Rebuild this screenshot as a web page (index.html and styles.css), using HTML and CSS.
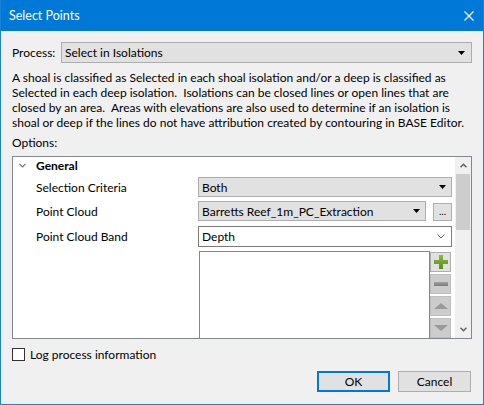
FILE: index.html
```html
<!DOCTYPE html>
<html>
<head>
<meta charset="utf-8">
<link rel="stylesheet" href="styles.css">
</head>
<body>
<div class="window">
  <div class="titlebar">
    <span class="title">Select Points</span>
    <svg class="close" width="10" height="10" viewBox="0 0 10 10"><path d="M0.5 0.5 L9.5 9.5 M9.5 0.5 L0.5 9.5" stroke="#fff" stroke-width="1.1" fill="none"/></svg>
  </div>
  <div class="content">
    <div class="process-row">
      <span class="process-label">Process:</span>
      <div class="combo combo-process">
        <span class="combo-text">Select in Isolations</span>
        <svg class="tri" width="7" height="4" viewBox="0 0 7 4"><path d="M0 0 H7 L3.5 4 Z" fill="#000"/></svg>
      </div>
    </div>
    <div class="desc">A shoal is classified as Selected in each shoal isolation and/or a deep is classified as
Selected in each deep isolation.  Isolations can be closed lines or open lines that are
closed by an area.  Areas with elevations are also used to determine if an isolation is
shoal or deep if the lines do not have attribution created by contouring in BASE Editor.</div>
    <div class="options-label">Options:</div>
    <div class="panel">
      <div class="tree">
        <div class="group-row">
          <svg class="chev" width="7" height="5" viewBox="0 0 7 5"><path d="M0.5 0.8 L3.5 3.8 L6.5 0.8" stroke="#707070" stroke-width="1.2" fill="none"/></svg>
          <span class="group-title">General</span>
        </div>
        <div class="prop-row">
          <span class="prop-label">Selection Criteria</span>
          <div class="combo combo-full">
            <span class="combo-text">Both</span>
            <svg class="tri" width="7" height="4" viewBox="0 0 7 4"><path d="M0 0 H7 L3.5 4 Z" fill="#000"/></svg>
          </div>
        </div>
        <div class="prop-row">
          <span class="prop-label">Point Cloud</span>
          <div class="value-split">
            <div class="combo combo-cloud">
              <span class="combo-text">Barretts Reef_1m_PC_Extraction</span>
              <svg class="tri" width="7" height="4" viewBox="0 0 7 4"><path d="M0 0 H7 L3.5 4 Z" fill="#000"/></svg>
            </div>
            <div class="ellipsis">...</div>
          </div>
        </div>
        <div class="prop-row row-gap5">
          <span class="prop-label">Point Cloud Band</span>
          <div class="combo combo-edit">
            <span class="combo-text">Depth</span>
            <svg class="vchev" width="8" height="5" viewBox="0 0 8 5"><path d="M0.5 0.5 L4 4 L7.5 0.5" stroke="#606060" stroke-width="1" fill="none"/></svg>
          </div>
        </div>
        <div class="list-row">
          <div class="listbox"></div>
          <div class="list-buttons">
            <div class="lbtn lbtn-on">
              <svg width="14" height="14" viewBox="0 0 14 14"><defs><linearGradient id="g" x1="0" y1="0" x2="0" y2="1"><stop offset="0" stop-color="#8dbb3c"/><stop offset="1" stop-color="#5f8c1a"/></linearGradient></defs><path d="M5 0 H9 V5 H14 V9 H9 V14 H5 V9 H0 V5 H5 Z" fill="url(#g)"/></svg>
            </div>
            <div class="lbtn lbtn-off">
              <svg width="14" height="4" viewBox="0 0 14 4"><defs><linearGradient id="m" x1="0" y1="0" x2="0" y2="1"><stop offset="0" stop-color="#a0a0a0"/><stop offset="1" stop-color="#7a7a7a"/></linearGradient></defs><rect x="0" y="0" width="14" height="4" fill="url(#m)"/></svg>
            </div>
            <div class="lbtn lbtn-off">
              <svg width="14" height="6" viewBox="0 0 14 6"><path d="M0 6 L7 0 L14 6 Z" fill="#9a9a9a"/></svg>
            </div>
            <div class="lbtn lbtn-off">
              <svg width="14" height="6" viewBox="0 0 14 6"><path d="M0 0 L14 0 L7 6 Z" fill="#9a9a9a"/></svg>
            </div>
          </div>
        </div>
      </div>
      <div class="scrollbar">
        <div class="sb-arrow">
          <svg width="7" height="5" viewBox="0 0 7 5"><path d="M0.5 4.2 L3.5 1.2 L6.5 4.2" stroke="#606060" stroke-width="1.5" fill="none"/></svg>
        </div>
        <div class="sb-thumb"></div>
        <div class="sb-space"></div>
        <div class="sb-arrow">
          <svg width="7" height="5" viewBox="0 0 7 5"><path d="M0.5 0.8 L3.5 3.8 L6.5 0.8" stroke="#606060" stroke-width="1.5" fill="none"/></svg>
        </div>
      </div>
    </div>
    <div class="check-row">
      <span class="checkbox"></span>
      <span class="check-label">Log process information</span>
    </div>
    <div class="button-row">
      <div class="btn btn-default">OK</div>
      <div class="btn">Cancel</div>
    </div>
  </div>
</div>
</body>
</html>
```
FILE: styles.css
```css
html, body {
  margin: 0;
  padding: 0;
}
body {
  font-family: "Lato", "Noto Sans", sans-serif;
  font-size: 12px;
  color: #000;
}
.window {
  width: 484px;
  height: 405px;
  box-sizing: border-box;
  border: 1px solid #1883d7;
  border-top: none;
  background: #f0f0f0;
  display: flex;
  flex-direction: column;
  overflow: hidden;
}
.titlebar {
  height: 31px;
  flex: none;
  background: #0078d7;
  display: flex;
  align-items: center;
  justify-content: space-between;
  padding-left: 8px;
  padding-right: 9px;
}
.title {
  color: #fff;
  font-size: 12.5px;
  line-height: 15px;
}
.close {
  display: block;
}
.content {
  padding: 11px 11px 0 11px;
  display: flex;
  flex-direction: column;
}
.process-row {
  display: flex;
  align-items: center;
  height: 21px;
}
.process-label {
  width: 49px;
  flex: none;
}
.combo {
  box-sizing: border-box;
  height: 20px;
  border: 1px solid #adadad;
  background: #e1e1e1;
  display: flex;
  align-items: center;
  justify-content: space-between;
  padding: 0 5px 0 3px;
}
.combo-process {
  flex: 1;
  height: 21px;
  padding-right: 6px;
}
.combo-text {
  white-space: nowrap;
  line-height: 15px;
}
.tri {
  display: block;
  flex: none;
}
.desc {
  margin-top: 7px;
  line-height: 15px;
  white-space: pre;
}
.options-label {
  margin-top: 5px;
  line-height: 15px;
}
.panel {
  margin-top: 6px;
  height: 183px;
  box-sizing: border-box;
  border: 1px solid #828790;
  background: #fff;
  display: flex;
  overflow: hidden;
}
.tree {
  width: 442px;
  flex: none;
  display: flex;
  flex-direction: column;
}
.group-row {
  height: 17px;
  flex: none;
  display: flex;
  align-items: center;
  padding-left: 6px;
}
.chev {
  display: block;
  margin-right: 10px;
}
.group-title {
  font-weight: bold;
  line-height: 15px;
}
.prop-row {
  display: grid;
  grid-template-columns: 185px 254px;
  align-items: center;
  height: 20px;
  margin-top: 4px;
  flex: none;
}
.group-row + .prop-row {
  margin-top: 3px;
}
.row-gap5 {
  margin-top: 5px;
  height: 21px;
}
.prop-label {
  padding-left: 23px;
  white-space: nowrap;
}
.combo-full {
  width: 254px;
}
.value-split {
  display: flex;
  align-items: flex-end;
  justify-content: space-between;
  height: 20px;
}
.combo-cloud {
  width: 228px;
}
.ellipsis {
  box-sizing: border-box;
  width: 19px;
  height: 18px;
  border: 1px solid #adadad;
  background: #e1e1e1;
  font-size: 10px;
  line-height: 14px;
  text-align: center;
  letter-spacing: 0;
}
.combo-edit {
  width: 254px;
  height: 21px;
  background: #fff;
  border-color: #7a7a7a;
  padding-right: 6px;
}
.vchev {
  display: block;
}
.list-row {
  display: flex;
  margin-top: 4px;
  margin-left: 186px;
  flex: none;
}
.listbox {
  box-sizing: border-box;
  width: 231px;
  height: 120px;
  border: 1px solid #828790;
  background: #fff;
}
.list-buttons {
  display: flex;
  flex-direction: column;
  gap: 2px;
  padding-top: 1px;
}
.lbtn {
  box-sizing: border-box;
  width: 21px;
  height: 20px;
  display: flex;
  align-items: center;
  justify-content: center;
}
.lbtn svg {
  display: block;
}
.lbtn-on {
  background: #e1e1e1;
  border: 1px solid #adadad;
}
.lbtn-off {
  background: #cccccc;
  border: 1px solid #bfbfbf;
}
.scrollbar {
  width: 16px;
  flex: none;
  background: #f0f0f0;
  display: flex;
  flex-direction: column;
}
.sb-arrow {
  height: 17px;
  flex: none;
  display: flex;
  align-items: center;
  justify-content: center;
}
.sb-arrow svg {
  display: block;
}
.sb-thumb {
  height: 56px;
  margin: 0 1px;
  background: #cdcdcd;
  flex: none;
}
.sb-space {
  flex: 1;
}
.check-row {
  margin-top: 9px;
  display: flex;
  align-items: center;
  height: 13px;
}
.checkbox {
  box-sizing: border-box;
  width: 13px;
  height: 13px;
  border: 1px solid #333;
  background: #fff;
  flex: none;
}
.check-label {
  margin-left: 5px;
  line-height: 15px;
}
.button-row {
  margin-top: 10px;
  display: flex;
  justify-content: flex-end;
  gap: 8px;
  padding-right: 1px;
}
.btn {
  box-sizing: border-box;
  width: 73px;
  height: 21px;
  border: 1px solid #adadad;
  background: #e1e1e1;
  display: flex;
  align-items: center;
  justify-content: center;
  line-height: 15px;
}
.btn-default {
  border: 2px solid #0078d7;
}
```
